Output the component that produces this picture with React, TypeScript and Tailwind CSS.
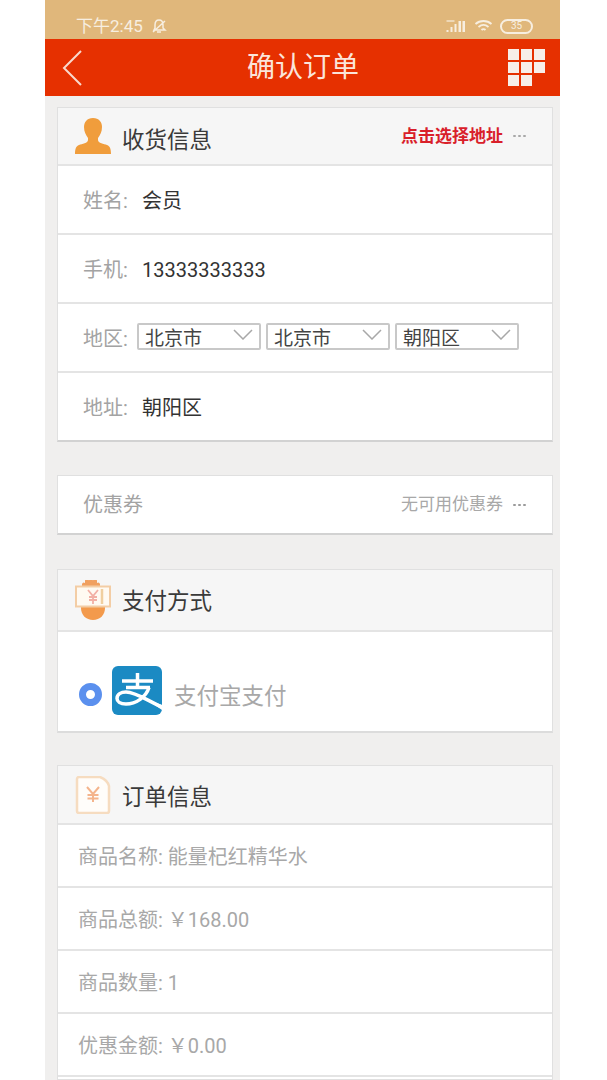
import React from "react";

const cjk = "font-['Roboto','Noto_Sans_CJK_SC',sans-serif]";

function CardHeader({
	icon,
	title,
	height,
	titleClass = "",
	children,
}: {
	icon: React.ReactNode;
	title: string;
	height: string;
	titleClass?: string;
	children?: React.ReactNode;
}) {
	return (
		<div className={`flex items-center bg-[#f6f6f6] pl-[17px] pr-[26px] border-b-2 border-[#e4e4e4] ${height}`}>
			<div className="w-[36px] h-[40px] flex items-center justify-center shrink-0">{icon}</div>
			<span className={`ml-[11px] text-[22.500px] leading-none text-[#3a3a3a] ${titleClass}`}>{title}</span>
			{children}
		</div>
	);
}

function Dots({ color = "bg-[#a8a8a8]" }: { color?: string }) {
	return (
		<span className="flex gap-[2px] ml-[10px]">
			<i className={`w-[3px] h-[2px] rounded-full ${color}`}></i>
			<i className={`w-[3px] h-[2px] rounded-full ${color}`}></i>
			<i className={`w-[3px] h-[2px] rounded-full ${color}`}></i>
		</span>
	);
}

function Row({ label, value }: { label: string; value: string }) {
	return (
		<div className="flex items-center h-[69px] last:h-[67px] pl-[25px] pt-[2px] border-b-2 border-[#e4e4e4] last:border-b-0">
			<span className="text-[20px] text-[#a3a3a3] w-[59px]">{label}</span>
			<span className="text-[20px] text-[#333333]">{value}</span>
		</div>
	);
}

function SelectBox({ value }: { value: string }) {
	return (
		<div className="w-[124px] h-[27px] border-2 border-[#c8c8c8] rounded-[2px] flex items-center justify-between pl-[6px] pr-[6px] overflow-hidden">
			<span className="text-[19px] leading-none text-[#444444] pt-[3px]">{value}</span>
			<svg width="20" height="11" viewBox="0 0 20 11" className="-mt-[5px]">
				<path d="M1 1 L10 10 L19 1" fill="none" stroke="#a8a8a8" strokeWidth="1.5" />
			</svg>
		</div>
	);
}

function InfoRow({ text }: { text: string }) {
	return (
		<div className="flex items-center h-[63px] pl-[20px] pt-[2px] border-b-2 border-[#e4e4e4] text-[20px] text-[#a8a8a8]">
			{text}
		</div>
	);
}

function UserIcon() {
	return (
		<svg width="36" height="38" viewBox="0 0 36 38">
			<path
				d="M18 1c6 0 9 4 9 9 0 5-2 8-4 11v2c0 3 6 4 9 5 3 1 4 4 4 9H0c0-5 1-8 4-9 3-1 9-2 9-5v-2c-2-3-4-6-4-11 0-5 3-9 9-9z"
				fill="#f09d3c"
			/>
		</svg>
	);
}

function PayIcon() {
	return (
		<svg width="36" height="40" viewBox="0 0 36 40">
			<path d="M7 9V4a2 2 0 0 1 3-1V1a2 2 0 0 1 4 0 2 2 0 0 1 4 0 2 2 0 0 1 4 0v2a2 2 0 0 1 3 1v5z" fill="#f0a060" />
			<path d="M6 24h24v4c0 7-5 12-12 12S6 35 6 28z" fill="#f39a4c" />
			<rect x="1" y="6.500" width="34" height="20" fill="#fffaf2" stroke="#f3cda5" strokeWidth="2" />
			<path d="M13 10l5 6 5-6M18 16v8M14 17h8M14 20h8" fill="none" stroke="#f2b0a5" strokeWidth="1.800" />
			<path d="M27 9v15" stroke="#f0cf9f" strokeWidth="2.500" />
		</svg>
	);
}

function BillIcon() {
	return (
		<svg width="36" height="38" viewBox="0 0 36 38">
			<path d="M2 3a2 2 0 0 1 2-2h21c5 2 8 5 9 9v25a2 2 0 0 1-2 2H4a2 2 0 0 1-2-2z" fill="#fffdfa" stroke="#f6dcc0" strokeWidth="2.500" />
			<path d="M12 11l6 7 6-7M18 18v8M12.500 19h11M12.500 22.500h11" fill="none" stroke="#f4b48c" strokeWidth="2" />
		</svg>
	);
}

function AlipayIcon() {
	return (
		<svg width="50" height="49" viewBox="0 0 50 49">
			<rect x="0" y="0" width="50" height="49" rx="6" fill="#1b8ac3" />
			<path d="M10 15h31M25.500 7v14M14 21.500h24" fill="none" stroke="#ffffff" strokeWidth="3.500" />
			<path d="M37 21.500C34 31 24 38 14 38 8 38 5 35.500 5 32.500 5 28.500 9 26 14 26c10 0 22 9 36 15" fill="none" stroke="#ffffff" strokeWidth="3.500" />
			<path d="M34 33l16 6v5z" fill="#ffffff" />
		</svg>
	);
}

export default function App() {
	return (
		<div className={`h-[1080px] overflow-hidden bg-white ${cjk}`}>
			<div className="ml-[45px] w-[515px] h-full bg-[#f0efee] flex flex-col">
				<div className="h-[39px] shrink-0 bg-[#e0b77b] flex items-center justify-between pl-[31px] pr-[27px] pt-[13px] text-[#f7eee0]">
					<div className="flex items-center gap-[8px]">
						<span className="text-[17px] leading-none">下午2:45</span>
						<svg width="16" height="16" viewBox="0 0 16 16" fill="none" stroke="#f7eee0" strokeWidth="1.500">
							<path d="M8 2c3 0 4 2 4 5v3l2 2H3l1-2V7c0-3 1-5 4-5zM2 14L14 3M6 14h4" />
						</svg>
					</div>
					<div className="flex items-center gap-[7px]">
						<svg width="22" height="14" viewBox="0 0 21 14" fill="#f7eee0">
							<rect x="1" y="11" width="2" height="2" />
							<rect x="5" y="8" width="2" height="5" />
							<rect x="9" y="5" width="2" height="8" />
							<rect x="13" y="2" width="2.500" height="11" />
							<rect x="17" y="2" width="2.500" height="11" />
							<rect x="1" y="1" width="8" height="2" opacity="0.6" />
						</svg>
						<svg width="19" height="14" viewBox="0 0 18 14" fill="none" stroke="#f7eee0" strokeWidth="1.800">
							<path d="M1 5c4.500-4 11.500-4 16 0M4 8c3-2.500 7-2.500 10 0M7 11c1-1 3-1 4 0" />
						</svg>
						<div className="w-[33px] h-[15px] rounded-full border-2 border-[#f7eee0] flex items-center justify-center text-[10px] leading-none">
							35
						</div>
					</div>
				</div>

				<div className="h-[57px] bg-[#e63000] flex items-center justify-between pl-[17px] pr-[15px] shrink-0">
					<svg width="20" height="36" viewBox="0 0 20 36" fill="none" stroke="#f9d9cc" strokeWidth="2">
						<path d="M19 1L2 18l17 17" />
					</svg>
					<span className="text-[28px] leading-none text-[#fbe5da] ml-[16px]">确认订单</span>
					<div className="grid grid-cols-3 gap-[2px] w-[37px]">
						{Array.from({ length: 8 }).map((_, i) => (
							<i key={i} className="w-[11px] h-[11px] bg-[#f7efe9]"></i>
						))}
					</div>
				</div>

				<div className="flex-1 pl-[12px] pr-[7px] pt-[11px] flex flex-col">
					<div className="border border-[#e0e0e0] border-b-2 border-b-[#d2d2d2] bg-white">
						<CardHeader icon={<UserIcon />} title="收货信息" height="h-[58px]" titleClass="mt-[8px]">
							<span className="ml-auto mt-[2px] text-[17px] font-bold text-[#d9202a]">点击选择地址</span>
							<Dots />
						</CardHeader>
						<Row label="姓名:" value="会员" />
						<Row label="手机:" value="13333333333" />
						<div className="flex items-center h-[69px] pl-[25px] border-b-2 border-[#e4e4e4]">
							<span className="text-[20px] text-[#a3a3a3] w-[54px] pt-[2px]">地区:</span>
							<div className="flex gap-[5px] -mt-[2px]">
								<SelectBox value="北京市" />
								<SelectBox value="北京市" />
								<SelectBox value="朝阳区" />
							</div>
						</div>
						<Row label="地址:" value="朝阳区" />
					</div>

					<div className="mt-[33px] h-[60px] border border-[#e0e0e0] border-b-2 border-b-[#d2d2d2] bg-white flex items-center pl-[25px] pr-[26px] shrink-0">
						<span className="text-[20px] text-[#a3a3a3]">优惠券</span>
						<span className="ml-auto text-[17px] text-[#a8a8a8]">无可用优惠券</span>
						<Dots color="bg-[#9a9a9a]" />
					</div>

					<div className="mt-[34px] h-[164px] shrink-0 border border-[#e0e0e0] border-b-2 border-b-[#dcdcdc] bg-white">
						<CardHeader icon={<PayIcon />} title="支付方式" height="h-[62px]" titleClass="mt-[2px]" />
						<div className="flex items-center pl-[21px] pt-[34px]">
							<span className="w-[23px] h-[23px] mt-[8px] rounded-full border-[7px] border-[#5b90ee] bg-white shrink-0"></span>
							<div className="ml-[10px]">
								<AlipayIcon />
							</div>
							<span className="ml-[12px] mt-[12px] text-[22.500px] leading-none text-[#a8a8a8]">支付宝支付</span>
						</div>
					</div>

					<div className="mt-[32px] border border-[#e0e0e0] bg-white flex-1">
						<CardHeader icon={<BillIcon />} title="订单信息" height="h-[59px]" titleClass="mt-[6px]" />
						<InfoRow text="商品名称: 能量杞红精华水" />
						<InfoRow text={"商品总额: \uFFE5168.00"} />
						<InfoRow text="商品数量: 1" />
						<InfoRow text={"优惠金额: \uFFE50.00"} />
					</div>
				</div>
			</div>
		</div>
	);
}
